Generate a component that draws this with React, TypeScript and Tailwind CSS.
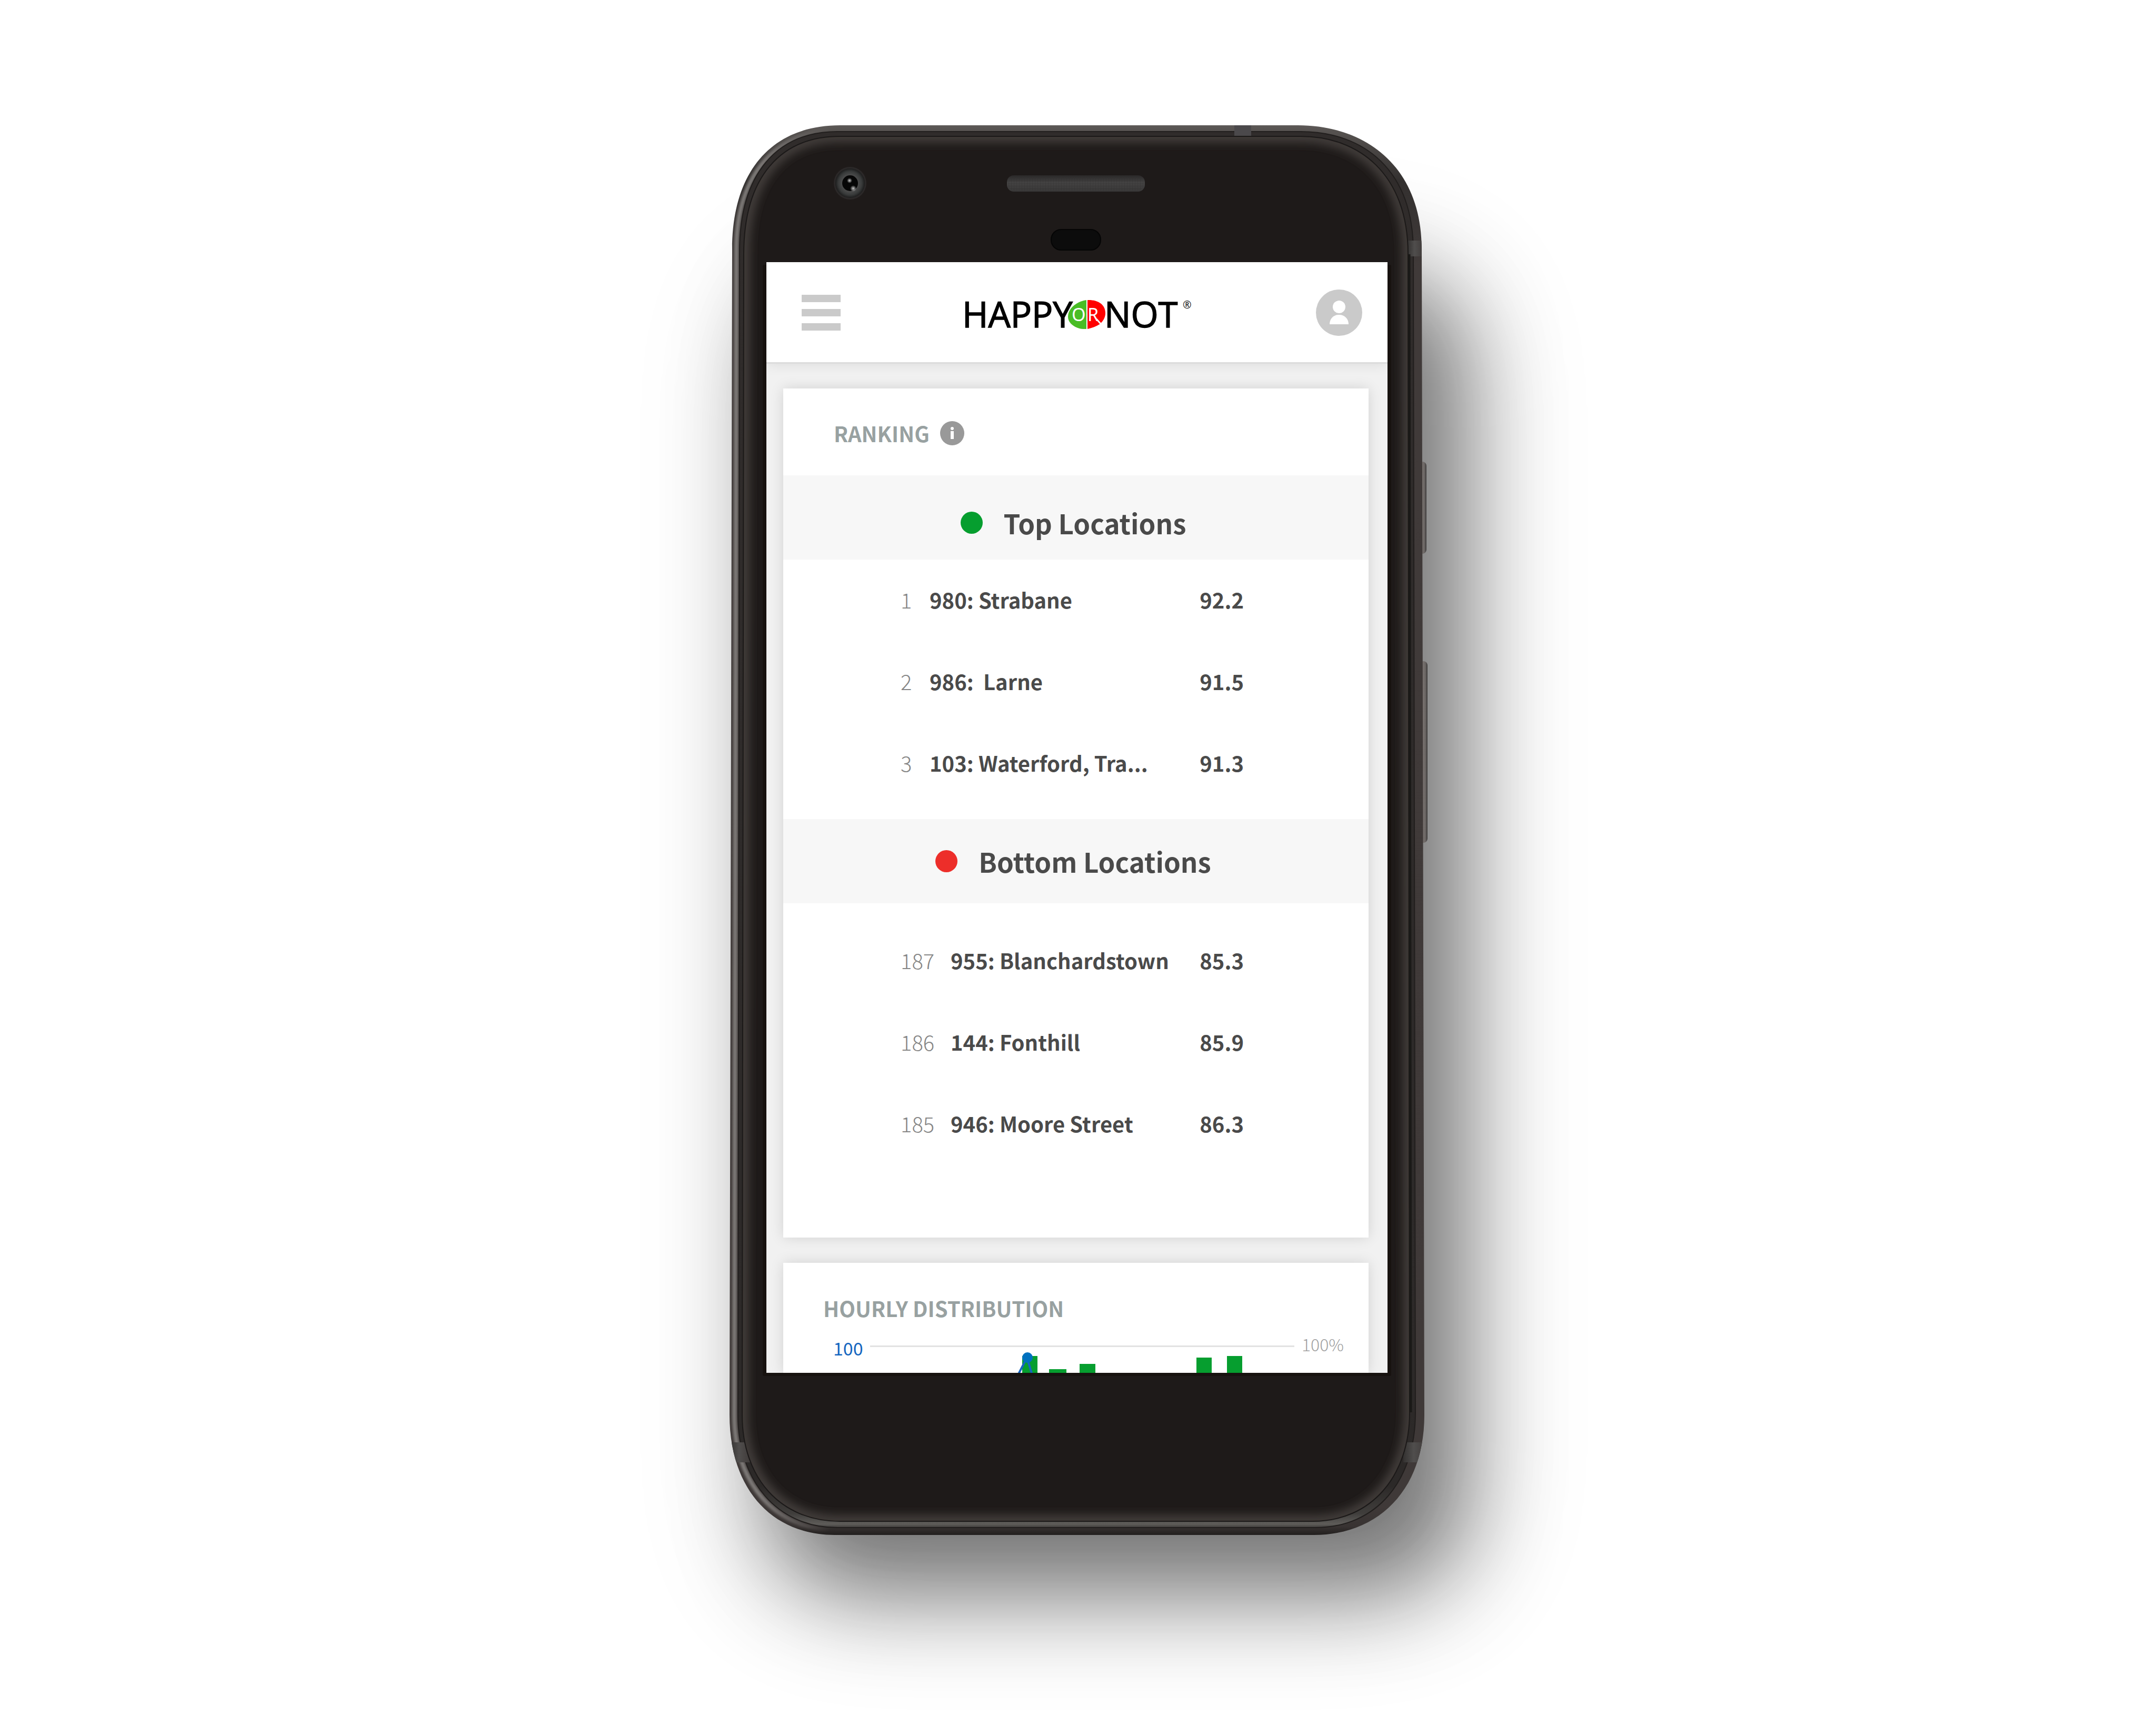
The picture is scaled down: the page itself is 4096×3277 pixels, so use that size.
import React from "react";

type Location = { rank: number; name: string; score: string };

const topLocations: Location[] = [
  { rank: 1, name: "980: Strabane", score: "92.2" },
  { rank: 2, name: "986: \u00a0Larne", score: "91.5" },
  { rank: 3, name: "103: Waterford, Tra...", score: "91.3" },
];

const bottomLocations: Location[] = [
  { rank: 187, name: "955: Blanchardstown", score: "85.3" },
  { rank: 186, name: "144: Fonthill", score: "85.9" },
  { rank: 185, name: "946: Moore Street", score: "86.3" },
];

const BODY =
  "M210 0 H1080 C1210 0 1315 80 1315 235 L1320 2450 C1320 2590 1235 2678 1110 2678 H200 C80 2678 0 2590 0 2450 L5 235 C5 88 80 0 210 0 Z";
const RIM =
  "M205 12 H1085 C1205 12 1299 85 1299 240 L1303 2445 C1303 2575 1230 2664 1112 2664 H205 C90 2664 16 2575 16 2450 L19 240 C19 92 90 12 205 12 Z";
const GLASS =
  "M210 21 H1085 C1195 21 1289 92 1289 245 L1292 2445 C1292 2565 1220 2652 1108 2652 H210 C97 2652 24 2570 24 2450 L27 245 C27 98 97 21 210 21 Z";
const LEFT_EDGE =
  "M215 7 C90 7 13 92 13 235 L9 2450 C9 2580 88 2668 200 2668";

function DeviceFrame() {
  return (
    <svg
      className="pointer-events-none absolute inset-0 h-full w-full overflow-visible"
      viewBox="0 0 1324 2678"
      preserveAspectRatio="none"
      aria-hidden="true"
    >
      <defs>
        <filter id="drop" filterUnits="userSpaceOnUse" x="-400" y="-200" width="2200" height="3300">
          <feGaussianBlur stdDeviation="90" />
        </filter>
        <filter id="halo" filterUnits="userSpaceOnUse" x="-500" y="-230" width="2400" height="3400">
          <feGaussianBlur stdDeviation="115" />
        </filter>
        <filter id="glow" filterUnits="userSpaceOnUse" x="-20" y="-20" width="1380" height="2720">
          <feGaussianBlur stdDeviation="9" />
        </filter>
        <filter id="soft" filterUnits="userSpaceOnUse" x="-20" y="-20" width="1380" height="2720">
          <feGaussianBlur stdDeviation="2" />
        </filter>
        <clipPath id="bodyClip">
          <path d={BODY} />
        </clipPath>
        <clipPath id="glassClip">
          <path d={GLASS} />
        </clipPath>
        <linearGradient id="bodyFill" x1="0" y1="0" x2="0" y2="1">
          <stop offset="0" stopColor="#5d5957" />
          <stop offset="0.004" stopColor="#565250" />
          <stop offset="0.04" stopColor="#33302f" />
          <stop offset="0.1" stopColor="#403a39" />
          <stop offset="0.98" stopColor="#3f3938" />
          <stop offset="0.994" stopColor="#383332" />
          <stop offset="1" stopColor="#221f1e" />
        </linearGradient>
        <linearGradient id="rimFill" x1="0" y1="0" x2="0" y2="1">
          <stop offset="0" stopColor="#302c2b" />
          <stop offset="0.97" stopColor="#2c2928" />
          <stop offset="0.99" stopColor="#403e3c" />
          <stop offset="0.9975" stopColor="#5e5c59" />
          <stop offset="1" stopColor="#3f3c3b" />
        </linearGradient>
        <linearGradient id="edgeLight" gradientUnits="userSpaceOnUse" x1="0" y1="0" x2="190" y2="0">
          <stop offset="0" stopColor="#7d7977" />
          <stop offset="0.3" stopColor="#7d7977" />
          <stop offset="1" stopColor="#7d7977" stopOpacity="0" />
        </linearGradient>
        <linearGradient id="button" x1="0" y1="0" x2="1" y2="0">
          <stop offset="0" stopColor="#4a4643" />
          <stop offset="0.5" stopColor="#7a7471" />
          <stop offset="0.8" stopColor="#6b6664" />
          <stop offset="1" stopColor="#3a3838" />
        </linearGradient>
        <linearGradient id="band" x1="0" y1="0" x2="1" y2="0">
          <stop offset="0" stopColor="#343231" />
          <stop offset="0.45" stopColor="#504e4d" />
          <stop offset="1" stopColor="#3f3a39" />
        </linearGradient>
        <linearGradient id="speaker" x1="0" y1="0" x2="0" y2="1">
          <stop offset="0" stopColor="#2a2828" />
          <stop offset="0.3" stopColor="#3a3939" />
          <stop offset="0.45" stopColor="#444343" />
          <stop offset="1" stopColor="#383737" />
        </linearGradient>
        <radialGradient id="lens" cx="0.5" cy="0.5" r="0.5">
          <stop offset="0.5" stopColor="#4e4e4e" />
          <stop offset="0.8" stopColor="#383a3a" />
          <stop offset="1" stopColor="#1c1c1c" />
        </radialGradient>
        <radialGradient id="glint">
          <stop offset="0" stopColor="#cfcfcf" />
          <stop offset="1" stopColor="#cfcfcf" stopOpacity="0" />
        </radialGradient>
        <pattern id="mesh" width="5" height="5" patternUnits="userSpaceOnUse">
          <path d="M0 0H5M0 0V5" stroke="#2b2a2a" strokeWidth="1" />
        </pattern>
      </defs>

      <rect x="10" y="230" width="1440" height="2600" rx="200" fill="#000" opacity="0.08" filter="url(#halo)" />
      <rect x="76" y="285" width="1320" height="2504" rx="170" fill="#000" opacity="0.5" filter="url(#drop)" />

      <rect x="1305" y="639" width="19" height="175" rx="8" fill="url(#button)" />
      <rect x="1306" y="1018" width="20" height="345" rx="8" fill="url(#button)" />

      <path d={BODY} fill="url(#bodyFill)" />
      <g clipPath="url(#bodyClip)">
        <path d={LEFT_EDGE} fill="none" stroke="url(#edgeLight)" strokeWidth="8" filter="url(#soft)" />
      </g>
      <path d={RIM} fill="url(#rimFill)" stroke="#211e1d" strokeWidth="2" />
      <g clipPath="url(#bodyClip)">
        <rect x="959" y="0" width="32" height="21" fill="#4b494b" />
        <rect x="1288" y="219" width="30" height="30" fill="url(#band)" />
        <rect x="1280" y="2502" width="44" height="38" fill="url(#band)" />
        <rect x="0" y="2502" width="40" height="38" fill="url(#band)" />
      </g>
      <path d={GLASS} fill="#1e1a19" />
      <g clipPath="url(#glassClip)">
        <path d={GLASS} fill="none" stroke="#443f3e" strokeWidth="22" filter="url(#glow)" />
      </g>
      <path d={GLASS} fill="none" stroke="#1b1918" strokeWidth="2" />
      <path d="M1291 245 L1294 2445" fill="none" stroke="#1a1917" strokeWidth="5" />

      <rect x="63" y="265" width="1194" height="2111" rx="3" fill="#17120f" />

      <circle cx="229" cy="110" r="31" fill="#2b2828" />
      <circle cx="229" cy="110" r="28" fill="url(#lens)" />
      <circle cx="229" cy="110" r="15" fill="#060606" />
      <circle cx="228" cy="105" r="5" fill="url(#glint)" />
      <circle cx="235" cy="120" r="6" fill="url(#glint)" />

      <rect x="527" y="95" width="262" height="31" rx="13" fill="url(#speaker)" />
      <rect x="529" y="101" width="258" height="23" rx="10" fill="url(#mesh)" opacity="0.5" />
      <rect x="611" y="198" width="94" height="39" rx="19" fill="#0c0c0c" stroke="#050505" strokeWidth="2" />
    </svg>
  );
}

function Logo() {
  return (
    <svg className="h-[76px] w-[430px] overflow-visible" viewBox="0 -4 430 76" role="img" aria-label="HappyOrNot">
      <g
        fill="#000"
        stroke="#000"
        strokeWidth="1.5"
        fontFamily="'Open Sans', 'Noto Sans', sans-serif"
        fontSize="67"
      >
        <text x="-6" y="62">HAPPY</text>
        <text x="264" y="62">NOT</text>
      </g>
      <path d="M230 10 C214 12 195 24 195 42 C195 55 211 65 224 65 H230 Z" fill="#49bd25" />
      <path d="M232 10 C250 9 266 17 266 35 C266 43 262 50 255 56 C249 60 241 63 232 65 Z" fill="#ff0000" />
      <g fill="#fff" fontFamily="'Noto Sans', 'Open Sans', sans-serif" fontSize="34">
        <text x="202" y="50">O</text>
        <text x="232" y="50">R</text>
      </g>
      <path d="M249 46 L257 55" stroke="#fff" strokeWidth="3" />
      <text x="413" y="26" fill="#222" fontFamily="'Noto Sans', sans-serif" fontSize="20">
        ®
      </text>
    </svg>
  );
}

function Header() {
  return (
    <header className="flex h-[193px] items-center justify-between border-b-[3px] border-[#dcdcdc] bg-white pt-0.5 pr-12 pl-[67px] shadow-[0_0_24px_rgba(0,0,0,0.1)]">
      <button type="button" aria-label="Open menu" className="flex w-[74px] flex-col gap-[13px]">
        <span className="h-[14px] w-full bg-[#cacaca]" />
        <span className="h-[14px] w-full bg-[#cacaca]" />
        <span className="h-[14px] w-full bg-[#cacaca]" />
      </button>
      <Logo />
      <button type="button" aria-label="Account" className="size-[88px]">
        <svg className="size-full" viewBox="0 0 88 88" aria-hidden="true">
          <circle cx="44" cy="44" r="44" fill="#cacaca" />
          <circle cx="44" cy="33" r="12" fill="#fff" />
          <path d="M26 66 C26 55 34 48 44 48 C54 48 62 55 62 66 Z" fill="#fff" />
        </svg>
      </button>
    </header>
  );
}

function Band({ title, dot, inset }: { title: string; dot: string; inset: string }) {
  return (
    <div className={`flex h-40 items-center justify-center gap-10 bg-[#f7f7f7] pr-2.5 ${inset}`}>
      <span className={`size-[42px] rounded-full ${dot}`} />
      <h3 className="text-[51px] leading-[60px] font-bold text-[#4a4a4a]">{title}</h3>
    </div>
  );
}

function LocationTable({ rows, label, rankWidth }: { rows: Location[]; label: string; rankWidth: string }) {
  return (
    <table aria-label={label} className="w-full table-fixed text-left text-[40px] leading-[48px]">
      <colgroup>
        <col className={rankWidth} />
        <col />
        <col className="w-[100px]" />
      </colgroup>
      <tbody>
        {rows.map((row) => (
          <tr key={row.rank} className="h-[155px]">
            <td className="pb-1 font-light text-[#858585]">{row.rank}</td>
            <th scope="row" className="pb-1 font-bold whitespace-nowrap text-[#4a4a4a]">
              {row.name}
            </th>
            <td className="pb-1 text-right font-bold text-[#4a4a4a]">{row.score}</td>
          </tr>
        ))}
      </tbody>
    </table>
  );
}

function RankingCard() {
  return (
    <section className="bg-white shadow-[0_0_24px_rgba(0,0,0,0.13)]">
      <div className="flex h-[165px] items-center gap-5 pt-1 pl-24">
        <h2 className="text-[40px] leading-[48px] font-bold text-[#98a1a1]">RANKING</h2>
        <button type="button" aria-label="About ranking" className="size-[46px]">
          <svg className="size-full" viewBox="0 0 46 46" aria-hidden="true">
            <circle cx="23" cy="23" r="23" fill="#999" />
            <circle cx="23" cy="14" r="3" fill="#fff" />
            <rect x="20" y="19" width="6" height="15" fill="#fff" />
          </svg>
        </button>
      </div>
      <Band title="Top Locations" dot="bg-[#069e2f]" inset="pt-5" />
      <div className="pr-[237px] pb-7 pl-[223px]">
        <LocationTable rows={topLocations} label="Top locations" rankWidth="w-[55px]" />
      </div>
      <Band title="Bottom Locations" dot="bg-[#ed2e2a]" inset="pt-0" />
      <div className="pt-8 pr-[237px] pb-[138px] pl-[223px]">
        <LocationTable rows={bottomLocations} label="Bottom locations" rankWidth="w-[95px]" />
      </div>
    </section>
  );
}

function HourlyCard() {
  return (
    <section className="bg-white shadow-[0_0_24px_rgba(0,0,0,0.13)]">
      <h2 className="pt-[62px] pl-[76px] text-[40px] leading-[48px] font-bold text-[#98a1a1]">
        HOURLY DISTRIBUTION
      </h2>
      <div className="mt-[23px] flex items-start pl-[95px]">
        <span className="w-[70px] text-[34px] leading-[58px] text-[#1566c0]">100</span>
        <svg
          className="h-[76px] min-w-0 flex-1"
          viewBox="0 0 806 76"
          preserveAspectRatio="none"
          role="img"
          aria-label="Hourly distribution chart"
        >
          <rect x="0" y="24" width="806" height="3" fill="#e2e2e2" />
          <g fill="#069e2f">
            <rect x="289" y="44" width="29" height="32" />
            <rect x="340" y="69" width="33" height="7" />
            <rect x="398" y="59" width="30" height="17" />
            <rect x="620" y="47" width="29" height="29" />
            <rect x="678" y="44" width="29" height="32" />
          </g>
          <path d="M281 80 L298 47 L308 80" fill="none" stroke="#1566c0" strokeWidth="4" />
          <circle cx="299" cy="47" r="10" fill="#0071bf" />
        </svg>
        <span className="w-[141px] pl-[14px] text-[32px] leading-[42px] font-light text-[#a0a0a0]">100%</span>
      </div>
    </section>
  );
}

export default function App() {
  return (
    <div className="flex min-h-screen items-start justify-center overflow-hidden bg-white pt-[238px] pb-[361px] font-['Noto_Sans_CJK_SC','Noto_Sans',sans-serif]">
      <div className="relative w-full max-w-[1324px] pt-[260px] pr-[74px] pb-[308px] pl-[70px]">
        <DeviceFrame />
        <main className="relative overflow-hidden bg-[#f1f1f1]">
          <Header />
          <div className="flex flex-col gap-12 pt-[47px] pr-9 pl-8">
            <RankingCard />
            <HourlyCard />
          </div>
        </main>
      </div>
    </div>
  );
}
